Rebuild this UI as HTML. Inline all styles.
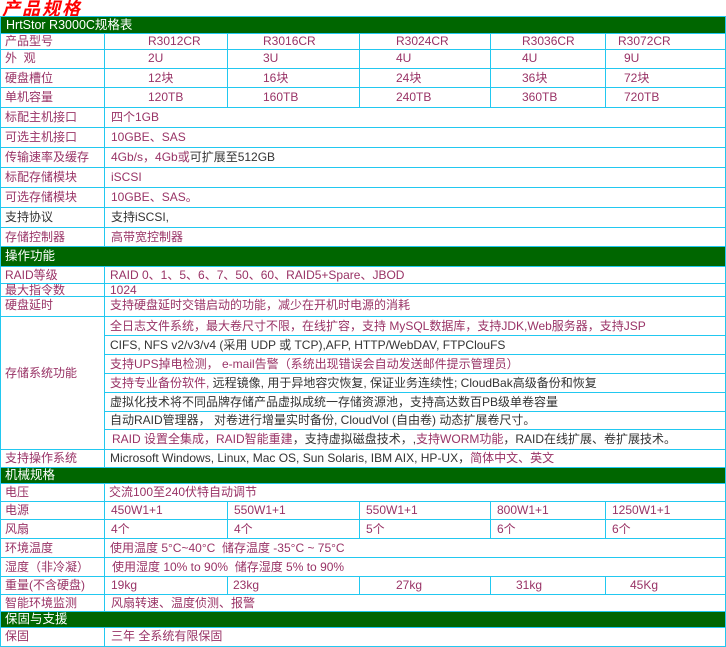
<!DOCTYPE html>
<html><head><meta charset="utf-8"><style>
body{margin:0;width:726px;height:647px;background:#fff;position:relative;overflow:hidden;font-family:"Liberation Sans","Noto Sans CJK SC",sans-serif;font-size:12px;color:#993366}
#grid{position:absolute;left:0;top:16px;width:726px;height:631px;background:#22c8f0}
.c{position:absolute;background:#fff;white-space:nowrap;overflow:hidden;padding-left:4px;box-sizing:border-box}
.g{background:#006600;color:#fff;font-size:12.5px}
.k{color:#333}
</style></head><body>
<div style="position:absolute;left:2px;top:-5px;color:#ff0000;font-weight:bold;font-style:italic;font-size:18px;letter-spacing:2px;font-family:'Noto Sans CJK SC',sans-serif">产品规格</div>
<div id="grid"></div>

<div class="c g" style="left:1px;top:17px;width:724px;height:16px;line-height:16px;padding-left:5px">HrtStor R3000C规格表</div>

<div class="c" style="left:1px;top:34px;width:103px;height:15px;line-height:15px">产品型号</div>
<div class="c" style="left:105px;top:34px;width:122px;height:15px;line-height:15px;padding-left:43px">R3012CR</div>
<div class="c" style="left:228px;top:34px;width:131px;height:15px;line-height:15px;padding-left:35px">R3016CR</div>
<div class="c" style="left:360px;top:34px;width:130px;height:15px;line-height:15px;padding-left:36px">R3024CR</div>
<div class="c" style="left:491px;top:34px;width:114px;height:15px;line-height:15px;padding-left:31px">R3036CR</div>
<div class="c" style="left:606px;top:34px;width:119px;height:15px;line-height:15px;padding-left:12px">R3072CR</div>

<div class="c" style="left:1px;top:50px;width:103px;height:18px;line-height:16px">外 &nbsp;观</div>
<div class="c" style="left:105px;top:50px;width:122px;height:18px;line-height:16px;padding-left:43px">2U</div>
<div class="c" style="left:228px;top:50px;width:131px;height:18px;line-height:16px;padding-left:35px">3U</div>
<div class="c" style="left:360px;top:50px;width:130px;height:18px;line-height:16px;padding-left:36px">4U</div>
<div class="c" style="left:491px;top:50px;width:114px;height:18px;line-height:16px;padding-left:31px">4U</div>
<div class="c" style="left:606px;top:50px;width:119px;height:18px;line-height:16px;padding-left:18px">9U</div>

<div class="c" style="left:1px;top:69px;width:103px;height:18px;line-height:18px">硬盘槽位</div>
<div class="c" style="left:105px;top:69px;width:122px;height:18px;line-height:18px;padding-left:43px">12块</div>
<div class="c" style="left:228px;top:69px;width:131px;height:18px;line-height:18px;padding-left:35px">16块</div>
<div class="c" style="left:360px;top:69px;width:130px;height:18px;line-height:18px;padding-left:36px">24块</div>
<div class="c" style="left:491px;top:69px;width:114px;height:18px;line-height:18px;padding-left:31px">36块</div>
<div class="c" style="left:606px;top:69px;width:119px;height:18px;line-height:18px;padding-left:18px">72块</div>

<div class="c" style="left:1px;top:88px;width:103px;height:19px;line-height:18px">单机容量</div>
<div class="c" style="left:105px;top:88px;width:122px;height:19px;line-height:18px;padding-left:43px">120TB</div>
<div class="c" style="left:228px;top:88px;width:131px;height:19px;line-height:18px;padding-left:35px">160TB</div>
<div class="c" style="left:360px;top:88px;width:130px;height:19px;line-height:18px;padding-left:36px">240TB</div>
<div class="c" style="left:491px;top:88px;width:114px;height:19px;line-height:18px;padding-left:31px">360TB</div>
<div class="c" style="left:606px;top:88px;width:119px;height:19px;line-height:18px;padding-left:18px">720TB</div>

<div class="c" style="left:1px;top:108px;width:103px;height:19px;line-height:19px">标配主机接口</div>
<div class="c" style="left:105px;top:108px;width:620px;height:19px;line-height:19px;padding-left:6px">四个1GB</div>
<div class="c" style="left:1px;top:128px;width:103px;height:19px;line-height:19px">可选主机接口</div>
<div class="c" style="left:105px;top:128px;width:620px;height:19px;line-height:19px;padding-left:6px">10GBE、SAS</div>
<div class="c" style="left:1px;top:148px;width:103px;height:19px;line-height:19px">传输速率及缓存</div>
<div class="c" style="left:105px;top:148px;width:620px;height:19px;line-height:19px;padding-left:6px">4Gb/s，4Gb或<span class="k">可扩展至512GB</span></div>
<div class="c" style="left:1px;top:168px;width:103px;height:19px;line-height:19px">标配存储模块</div>
<div class="c" style="left:105px;top:168px;width:620px;height:19px;line-height:19px;padding-left:6px">iSCSI</div>
<div class="c" style="left:1px;top:188px;width:103px;height:19px;line-height:19px">可选存储模块</div>
<div class="c" style="left:105px;top:188px;width:620px;height:19px;line-height:19px;padding-left:6px">10GBE、SAS。</div>
<div class="c k" style="left:1px;top:208px;width:103px;height:19px;line-height:19px">支持协议</div>
<div class="c k" style="left:105px;top:208px;width:620px;height:19px;line-height:19px;padding-left:6px">支持iSCSI,</div>
<div class="c" style="left:1px;top:228px;width:103px;height:18px;line-height:18px">存储控制器</div>
<div class="c" style="left:105px;top:228px;width:620px;height:18px;line-height:18px;padding-left:6px">高带宽控制器</div>

<div class="c g" style="left:1px;top:247px;width:724px;height:19px;line-height:19px">操作功能</div>
<div class="c" style="left:1px;top:267px;width:103px;height:16px;line-height:16px">RAID等级</div>
<div class="c" style="left:105px;top:267px;width:620px;height:16px;line-height:16px;padding-left:5px">RAID 0、1、5、6、7、50、60、RAID5+Spare、JBOD</div>
<div class="c" style="left:1px;top:284px;width:103px;height:12px;line-height:12px">最大指令数</div>
<div class="c" style="left:105px;top:284px;width:620px;height:12px;line-height:12px;padding-left:5px">1024</div>
<div class="c" style="left:1px;top:297px;width:103px;height:19px;line-height:17px">硬盘延时</div>
<div class="c" style="left:105px;top:297px;width:620px;height:19px;line-height:17px;padding-left:5px">支持硬盘延时交错启动的功能，减少在开机时电源的消耗</div>

<div class="c" style="left:1px;top:317px;width:103px;height:132px;line-height:112px">存储系统功能</div>
<div class="c" style="left:105px;top:317px;width:620px;height:18px;line-height:18px;padding-left:5px">全日志文件系统，最大卷尺寸不限，在线扩容，支持 MySQL数据库，支持JDK,Web服务器，支持JSP</div>
<div class="c k" style="left:105px;top:336px;width:620px;height:18px;line-height:18px;padding-left:5px">CIFS, NFS v2/v3/v4 (采用 UDP 或 TCP),AFP, HTTP/WebDAV, FTPClouFS</div>
<div class="c" style="left:105px;top:355px;width:620px;height:18px;line-height:18px;padding-left:5px">支持UPS掉电检测， e-mail告警（系统出现错误会自动发送邮件提示管理员）</div>
<div class="c k" style="left:105px;top:374px;width:620px;height:18px;line-height:18px;padding-left:5px"><span style="color:#993366">支持专业备份软件,</span> 远程镜像, 用于异地容灾恢复, 保证业务连续性; CloudBak高级备份和恢复</div>
<div class="c k" style="left:105px;top:393px;width:620px;height:18px;line-height:18px;padding-left:5px">虚拟化技术将不同品牌存储产品虚拟成统一存储资源池，支持高达数百PB级单卷容量</div>
<div class="c k" style="left:105px;top:412px;width:620px;height:17px;line-height:17px;padding-left:5px">自动RAID管理器， 对卷进行增量实时备份, CloudVol (自由卷) 动态扩展卷尺寸。</div>
<div class="c k" style="left:105px;top:430px;width:620px;height:19px;line-height:19px;padding-left:7px"><span style="color:#993366">RAID 设置全集成，RAID智能重建</span>，支持虚拟磁盘技术，,<span style="color:#993366">支持WORM功能</span>，RAID在线扩展、卷扩展技术。</div>

<div class="c" style="left:1px;top:450px;width:103px;height:17px;line-height:17px">支持操作系统</div>
<div class="c k" style="left:105px;top:450px;width:620px;height:17px;line-height:17px;padding-left:5px">Microsoft Windows, Linux, Mac OS, Sun Solaris, IBM AIX, HP-UX，<span style="color:#993366">简体中文、英文</span></div>

<div class="c g" style="left:1px;top:468px;width:724px;height:15px;line-height:15px">机械规格</div>
<div class="c" style="left:1px;top:484px;width:103px;height:17px;line-height:17px">电压</div>
<div class="c" style="left:105px;top:484px;width:620px;height:17px;line-height:17px;padding-left:4px">交流100至240伏特自动调节</div>

<div class="c" style="left:1px;top:502px;width:103px;height:17px;line-height:17px">电源</div>
<div class="c" style="left:105px;top:502px;width:122px;height:17px;line-height:17px;padding-left:6px">450W1+1</div>
<div class="c" style="left:228px;top:502px;width:131px;height:17px;line-height:17px;padding-left:6px">550W1+1</div>
<div class="c" style="left:360px;top:502px;width:130px;height:17px;line-height:17px;padding-left:6px">550W1+1</div>
<div class="c" style="left:491px;top:502px;width:114px;height:17px;line-height:17px;padding-left:6px">800W1+1</div>
<div class="c" style="left:606px;top:502px;width:119px;height:17px;line-height:17px;padding-left:6px">1250W1+1</div>

<div class="c" style="left:1px;top:520px;width:103px;height:18px;line-height:18px">风扇</div>
<div class="c" style="left:105px;top:520px;width:122px;height:18px;line-height:18px;padding-left:6px">4个</div>
<div class="c" style="left:228px;top:520px;width:131px;height:18px;line-height:18px;padding-left:6px">4个</div>
<div class="c" style="left:360px;top:520px;width:130px;height:18px;line-height:18px;padding-left:6px">5个</div>
<div class="c" style="left:491px;top:520px;width:114px;height:18px;line-height:18px;padding-left:6px">6个</div>
<div class="c" style="left:606px;top:520px;width:119px;height:18px;line-height:18px;padding-left:6px">6个</div>

<div class="c" style="left:1px;top:539px;width:103px;height:18px;line-height:18px">环境温度</div>
<div class="c" style="left:105px;top:539px;width:620px;height:18px;line-height:18px;padding-left:5px">使用温度 5°C~40°C &nbsp;储存温度 -35°C ~ 75°C</div>
<div class="c" style="left:1px;top:558px;width:103px;height:18px;line-height:18px">湿度（非冷凝）</div>
<div class="c" style="left:105px;top:558px;width:620px;height:18px;line-height:18px;padding-left:7px">使用湿度 10% to 90% &nbsp;储存湿度 5% to 90%</div>

<div class="c" style="left:1px;top:577px;width:103px;height:17px;line-height:17px">重量(不含硬盘)</div>
<div class="c" style="left:105px;top:577px;width:122px;height:17px;line-height:17px;padding-left:6px">19kg</div>
<div class="c" style="left:228px;top:577px;width:131px;height:17px;line-height:17px;padding-left:5px">23kg</div>
<div class="c" style="left:360px;top:577px;width:130px;height:17px;line-height:17px;padding-left:36px">27kg</div>
<div class="c" style="left:491px;top:577px;width:114px;height:17px;line-height:17px;padding-left:25px">31kg</div>
<div class="c" style="left:606px;top:577px;width:119px;height:17px;line-height:17px;padding-left:24px">45Kg</div>

<div class="c" style="left:1px;top:595px;width:103px;height:16px;line-height:16px">智能环境监测</div>
<div class="c" style="left:105px;top:595px;width:620px;height:16px;line-height:16px;padding-left:6px">风扇转速、温度侦测、报警</div>

<div class="c g" style="left:1px;top:612px;width:724px;height:15px;line-height:15px">保固与支援</div>
<div class="c" style="left:1px;top:628px;width:103px;height:18px;line-height:16px">保固</div>
<div class="c" style="left:105px;top:628px;width:620px;height:18px;line-height:16px;padding-left:6px">三年 全系统有限保固</div>
</body></html>
